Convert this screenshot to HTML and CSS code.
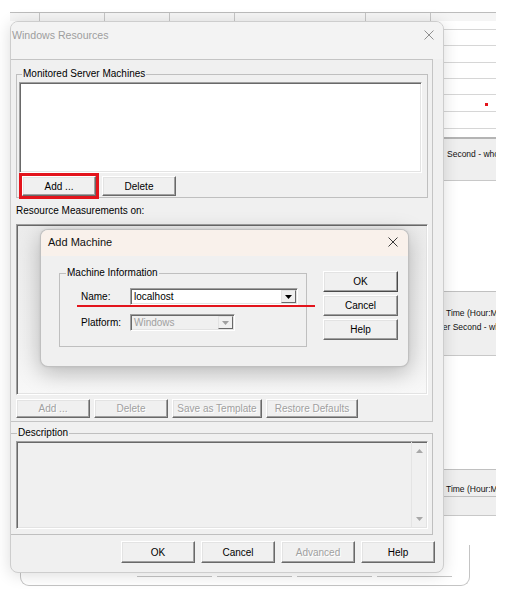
FILE: index.html
```html
<!DOCTYPE html>
<html lang="en">
<head>
<meta charset="utf-8">
<title>Windows Resources</title>
<link rel="stylesheet" href="styles.css">
</head>
<body>
<div class="bg-win">
  <div class="bg-head">
    <span class="hc w30"></span><span class="hc w65"></span><span class="hc w65"></span><span class="hc w65"></span><span class="hc w131"></span><span class="hc w65"></span>
  </div>
  <div class="bg-row h9"></div>
  <div class="bg-row h16"></div>
  <div class="bg-row h17"></div>
  <div class="bg-row h16"></div>
  <div class="bg-row h16"></div>
  <div class="bg-row h17 dot-row"><span class="red-dot"></span></div>
  <div class="bg-row h17"></div>
  <div class="gap8"></div>
  <div class="band band1"><div class="cell-text t437">Second - whole</div></div>
  <div class="gap110"></div>
  <div class="band band2">
    <div class="cell-text t436">Time (Hour:Minute)</div>
    <div class="cell-text t428">per Second - whole</div>
  </div>
  <div class="gap113"></div>
  <div class="band band3">
    <div class="band3-top"><div class="cell-text t436">Time (Hour:Minute)</div></div>
  </div>
</div>

<div class="bg-bottom">
  <span class="bb"></span><span class="bb"></span><span class="bb"></span><span class="bb"></span>
</div>

<div class="win-main">
  <div class="main-title">
    <span class="t">Windows Resources</span>
    <svg class="x-main" width="10" height="10" viewBox="0 0 10 10"><path d="M0.5 0.5L9.5 9.5M9.5 0.5L0.5 9.5" stroke="#8f8f8f" stroke-width="1" fill="none"/></svg>
  </div>
  <div class="panel">
    <fieldset class="grp-servers">
      <legend class="lg-servers">Monitored Server Machines</legend>
      <div class="sunken listbox"></div>
      <div class="btn-row">
        <button class="btn btn-flag">Add ...</button>
        <button class="btn">Delete</button>
      </div>
    </fieldset>
    <div class="lbl-res">Resource Measurements on:</div>
    <div class="sunken listview"></div>
    <div class="btn-row dis-row">
      <button class="btn dis w74">Add ...</button>
      <button class="btn dis w74">Delete</button>
      <button class="btn dis w90">Save as Template</button>
      <button class="btn dis w92">Restore Defaults</button>
    </div>
  </div>
  <fieldset class="grp-desc">
    <legend class="lg-desc">Description</legend>
    <div class="sunken desc">
      <div class="desc-body"></div>
      <div class="desc-scroll">
        <svg width="7" height="4" viewBox="0 0 7 4"><path d="M3.5 0L7 4H0Z" fill="#a8a8a8"/></svg>
        <svg width="7" height="4" viewBox="0 0 7 4"><path d="M0 0H7L3.5 4Z" fill="#a8a8a8"/></svg>
      </div>
    </div>
  </fieldset>
  <div class="main-btns">
    <button class="btn tall">OK</button>
    <button class="btn tall">Cancel</button>
    <button class="btn tall dis">Advanced</button>
    <button class="btn tall">Help</button>
  </div>
</div>

<div class="win-add">
  <div class="add-title">
    <span class="t">Add Machine</span>
    <svg class="x-add" width="10" height="10" viewBox="0 0 10 10"><path d="M0.5 0.5L9.5 9.5M9.5 0.5L0.5 9.5" stroke="#3a3a3a" stroke-width="1" fill="none"/></svg>
  </div>
  <div class="add-body">
    <fieldset class="grp-machine">
      <legend class="lg-machine">Machine Information</legend>
      <div class="field-row first">
        <span class="f-lbl">Name:</span>
        <div class="sunken combo c-name">
          <span class="combo-text">localhost</span>
          <span class="drop"><svg width="7" height="4" viewBox="0 0 7 4"><path d="M0 0H7L3.5 4Z" fill="#000"/></svg></span>
        </div>
      </div>
      <div class="field-row">
        <span class="f-lbl">Platform:</span>
        <div class="sunken combo c-plat disabled">
          <span class="combo-text">Windows</span>
          <span class="drop"><svg width="7" height="4" viewBox="0 0 7 4"><path d="M0 0H7L3.5 4Z" fill="#a0a0a0"/></svg></span>
        </div>
      </div>
    </fieldset>
    <div class="add-btns">
      <button class="btn add-btn default">OK</button>
      <button class="btn add-btn">Cancel</button>
      <button class="btn add-btn">Help</button>
    </div>
  </div>
</div>

<div class="red-line"></div>
</body>
</html>
```

FILE: styles.css
```css
* { box-sizing: border-box; }
html, body { margin: 0; padding: 0; }
body {
  width: 518px;
  height: 605px;
  position: relative;
  overflow: hidden;
  background: #fff;
  font-family: "Liberation Sans", Arial, sans-serif;
  font-size: 10px;
  color: #000;
}

/* background window (behind) */
.bg-win {
  position: absolute;
  left: 10px;
  top: 12px;
  width: 486px;
  height: 520px;
  overflow: hidden;
  background: #fff;
}
.bg-head {
  display: flex;
  height: 9px;
  border-top: 1px solid #bcbcbc;
  background: #f5f5f5;
}
.hc { flex: none; border-right: 1px solid #c6c6c6; height: 100%; }
.w30 { width: 30px; }
.w65 { width: 65px; }
.w131 { width: 131px; }
.bg-row { border-bottom: 1px solid #d6d6d6; }
.h9 { height: 9px; }
.h16 { height: 16px; }
.h17 { height: 17px; }
.dot-row { padding-top: 8px; }
.red-dot {
  display: block;
  width: 3px;
  height: 3px;
  margin-left: 475px;
  background: #e3141c;
}
.gap8 { height: 8px; }
.gap110 { height: 110px; }
.gap113 { height: 113px; }
.band { background: #efefef; border-bottom: 1px solid #c8c8c8; }
.band1 { height: 44px; border-top: 2px solid #b4b4b4; padding-top: 9px; }
.band2 { height: 65px; border-top: 1px solid #c0c0c0; padding-top: 14px; }
.band3 { height: 47px; border-top: 1px solid #c0c0c0; }
.band3-top { height: 27px; border-bottom: 1px solid #c0c0c0; padding-top: 13px; }
.cell-text { white-space: nowrap; line-height: 12px; font-size: 8.5px; color: #111; }
.band2 .cell-text { line-height: 14px; }
.t437 { padding-left: 437px; }
.t436 { padding-left: 436px; }
.t428 { padding-left: 428px; }

.bg-bottom {
  position: absolute;
  left: 20px;
  top: 545px;
  width: 450px;
  height: 41px;
  border: 1px solid #c4c4c4;
  border-top: none;
  border-radius: 0 0 9px 9px;
  padding: 31px 0 0 116px;
  display: flex;
  align-items: flex-start;
  gap: 5px;
  overflow: hidden;
}
.bb { width: 75px; height: 1px; border-top: 1px solid #c4c4c4; flex: none; }

/* classic controls */
.btn {
  display: block;
  flex: none;
  height: 20px;
  width: 74px;
  padding: 0;
  margin: 0;
  background: #f0f0f0;
  border: 1px solid;
  border-color: #fff #696969 #696969 #fff;
  box-shadow: inset -1px -1px 0 #a0a0a0, inset 1px 1px 0 #e3e3e3;
  font-family: "Liberation Sans", Arial, sans-serif;
  font-size: 10px;
  color: #000;
  text-align: center;
}
.btn.dis { color: #a0a0a0; text-shadow: 1px 1px 0 #fff; }
.sunken {
  background: #fff;
  border: 1px solid;
  border-color: #a0a0a0 #fff #fff #a0a0a0;
  box-shadow: inset 1px 1px 0 #696969, inset -1px -1px 0 #e3e3e3;
}
fieldset {
  margin: 0;
  padding: 0;
  min-width: 0;
  border: 1px solid #bfbfbf;
}
legend {
  padding: 0 1px;
  font-size: 10px;
  line-height: 12px;
}

/* main window */
.win-main {
  position: absolute;
  left: 10px;
  top: 21px;
  width: 434px;
  height: 552px;
  background: #f0f0f0;
  border: 1px solid #cdcdcd;
  border-radius: 8px;
  box-shadow: 0 2px 16px rgba(0, 0, 0, 0.14);
  overflow: hidden;
}
.main-title {
  height: 37px;
  background: #f3f3f3;
  display: flex;
  justify-content: space-between;
  align-items: flex-start;
  padding: 6px 9px 0 1px;
}
.main-title .t { font-size: 10.6px; line-height: 14px; color: #9e9e9e; }
.x-main { margin-top: 2px; }

.panel {
  width: 422px;
  border-top: 1px solid #c4c4c4;
  border-right: 1px solid #c4c4c4;
  border-bottom: 1px solid #c4c4c4;
  padding: 0 4px 3px 5px;
}
.grp-servers { width: 412px; margin-top: 8px; padding-bottom: 1px; }
.lg-servers { margin-left: 5px; }
.listbox { width: 403px; height: 91px; margin: 2px 0 0 2px; }
.btn-row { display: flex; gap: 6px; }
.grp-servers .btn-row { margin-top: 3px; padding-left: 5px; }
.btn-flag { outline: 3px solid #e3141c; outline-offset: 0; }
.lbl-res { margin-top: 7px; line-height: 12px; }
.listview {
  width: 412px;
  height: 171px;
  margin-top: 7px;
  background: linear-gradient(#ececec, #f2f2f2 70%, #f8f8f8);
}
.dis-row { margin-top: 4px; gap: 4px; }
.dis-row .btn { height: 19px; }
.w74 { width: 74px; }
.w90 { width: 90px; }
.w92 { width: 92px; }

.grp-desc { width: 422px; margin-top: 5px; border-left: none; padding-bottom: 5px; }
.lg-desc { margin-left: 6px; }
.desc {
  width: 412px;
  height: 88px;
  margin: 2px 0 0 5px;
  background: #f0f0f0;
  display: flex;
}
.desc-body { flex: 1; }
.desc-scroll {
  width: 16px;
  border-left: 1px solid #e4e4e4;
  display: flex;
  flex-direction: column;
  justify-content: space-between;
  align-items: center;
  padding: 7px 0 7px;
}

.main-btns {
  display: flex;
  justify-content: flex-end;
  gap: 6px;
  margin-top: 6px;
  padding-right: 8px;
}
.btn.tall { height: 22px; }

/* Add Machine dialog */
.win-add {
  position: absolute;
  left: 40px;
  top: 229px;
  width: 369px;
  height: 138px;
  background: #f0f0f0;
  border: 1px solid rgba(0, 0, 0, 0.2);
  border-radius: 8px;
  overflow: hidden;
  box-shadow: 0 6px 22px rgba(0, 0, 0, 0.25), 0 0 3px rgba(0, 0, 0, 0.08);
}
.add-title {
  height: 26px;
  background: #f9f1eb;
  display: flex;
  justify-content: space-between;
  align-items: flex-start;
  padding: 5px 10px 0 7px;
}
.add-title .t { font-size: 11px; line-height: 14px; color: #111; }
.x-add { margin-top: 2px; }
.add-body { display: flex; align-items: flex-start; padding-left: 18px; }
.grp-machine { width: 248px; margin-top: 11px; padding-bottom: 15px; }
.lg-machine { margin-left: 6px; }
.field-row {
  display: flex;
  align-items: center;
  height: 17px;
  margin-top: 9px;
  padding-left: 21px;
}
.f-lbl { width: 49px; flex: none; }
.combo { display: flex; height: 17px; padding: 1px; flex: none; }
.c-name { width: 168px; }
.c-plat { width: 105px; }
.combo-text { flex: 1; padding-left: 2px; line-height: 13px; white-space: nowrap; }
.drop {
  width: 15px;
  flex: none;
  background: #f0f0f0;
  border: 1px solid;
  border-color: #e3e3e3 #696969 #696969 #e3e3e3;
  display: flex;
  align-items: center;
  justify-content: center;
}
.combo.disabled { background: #f0f0f0; }
.combo.disabled .combo-text { color: #a0a0a0; }
.add-btns {
  display: flex;
  flex-direction: column;
  gap: 3px;
  margin: 15px 0 0 16px;
}
.add-btn { width: 75px; height: 21px; }
.add-btn.default { border-color: #fff #4a4a4a #4a4a4a #fff; }

.red-line {
  position: absolute;
  left: 77px;
  top: 305px;
  width: 238px;
  height: 2px;
  background: #e3141c;
}
```
